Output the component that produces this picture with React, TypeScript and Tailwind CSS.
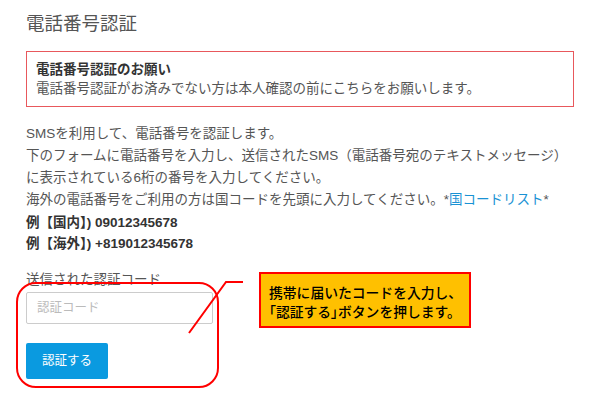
export default function App() {
  return (
    <div
      className="relative w-[590px] h-[413px] bg-white overflow-hidden text-[#555]"
      style={{ fontFamily: '"Liberation Sans", "Noto Sans CJK JP", sans-serif' }}
    >
      <div className="px-[26px] pt-[10px]">
        <h1 className="text-[18.5px] leading-[28px] font-normal text-[#555]">電話番号認証</h1>

        <div className="mt-[13px] w-[548px] h-[56px] border border-[#e8585c] px-[9px] pt-[8px]">
          <p className="text-[13.5px] leading-[19px] font-bold text-[#333]">電話番号認証のお願い</p>
          <p className="text-[13.5px] leading-[19px]">電話番号認証がお済みでない方は本人確認の前にこちらをお願いします。</p>
        </div>

        <div className="mt-[16px] text-[13.5px] leading-[22px] whitespace-nowrap">
          <p>SMSを利用して、電話番号を認証します。</p>
          <p>下のフォームに電話番号を入力し、送信されたSMS（電話番号宛のテキストメッセージ）</p>
          <p>に表示されている6桁の番号を入力してください。</p>
          <p>
            海外の電話番号をご利用の方は国コードを先頭に入力してください。*
            <span className="text-[#1a92d4]">国コードリスト</span>*
          </p>
        </div>

        <div className="mt-[1px] text-[13.5px] leading-[21px] font-bold text-[#333]">
          <p>例【国内】) 09012345678</p>
          <p>例【海外】) +819012345678</p>
        </div>

        <p className="mt-[17px] text-[13.5px] leading-[17px]">送信された認証コード</p>
        <div className="mt-[4px] w-[187px] h-[32px] border border-[#ccc] rounded-[2px] flex items-center px-[10px]">
          <span className="text-[12.5px] text-[#bbb]">認証コード</span>
        </div>
        <button className="mt-[19px] w-[82px] h-[36px] bg-[#0a9ae0] rounded-[2px] text-white text-[12.5px]">
          認証する
        </button>
      </div>

      {/* annotation */}
      <div className="absolute left-[16px] top-[282px] w-[203px] h-[106px] border-2 border-[#ff0000] rounded-[20px]" />
      <svg className="absolute left-0 top-0" width="590" height="413">
        <polyline points="189,333 226,282 243,282" fill="none" stroke="#ff0000" strokeWidth="2" />
      </svg>
      <div
        className="absolute left-[259px] top-[272px] w-[212px] h-[56px] bg-[#ffc000] border-2 border-[#ff0000] pl-[8px] pt-[9px] text-[13.8px] leading-[19px] font-medium text-black whitespace-nowrap"
        style={{ fontFamily: '"Noto Sans CJK JP", sans-serif' }}
      >
        <p>携帯に届いたコードを入力し、</p>
        <p>
          <span className="[font-feature-settings:'palt']">「</span>認証する
          <span className="[font-feature-settings:'palt']">」</span>ボタンを押します。
        </p>
      </div>
    </div>
  );
}
